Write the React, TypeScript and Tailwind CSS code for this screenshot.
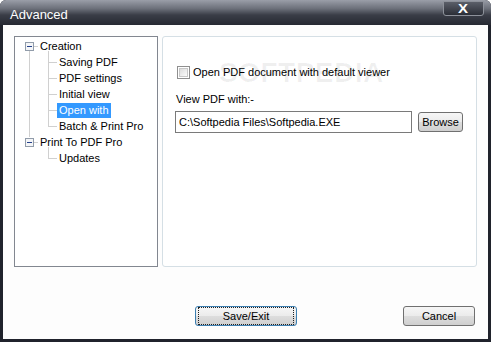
const font = "font-['Liberation_Sans',Arial,sans-serif]";

function TreeLines() {
  // coordinates relative to tree inner box (page x-15, y-37)
  const ox = 15;
  const oy = 37;
  const l = (x1: number, y1: number, x2: number, y2: number, k: string) => (
    <line
      key={k}
      x1={x1 - ox + 0.5}
      y1={y1 - oy + 0.5}
      x2={x2 - ox + 0.5}
      y2={y2 - oy + 0.5}
      stroke="#a0a0a0"
      strokeWidth={1}
      strokeDasharray="1 1"
    />
  );
  const box = (cy: number, k: string) => (
    <g key={k}>
      <rect x={25 - ox + 0.5} y={cy - 4 - oy + 0.5} width={8} height={8} fill="#f4f5f7" stroke="#919caa" />
      <line x1={27 - ox} y1={cy - oy + 0.5} x2={32 - ox} y2={cy - oy + 0.5} stroke="#24418c" />
    </g>
  );
  const rows = [62, 78, 94, 110, 126];
  return (
    <svg className="absolute inset-0 pointer-events-none" width="142" height="229">
      {l(29, 51, 29, 137, "v0")}
      {l(34, 46, 38, 46, "s0")}
      {l(34, 142, 38, 142, "s1")}
      {l(48, 51, 48, 126, "v1")}
      {rows.map((y, i) => l(49, y, 56, y, "c" + i))}
      {l(48, 147, 48, 158, "v2")}
      {l(49, 158, 56, 158, "c9")}
      {box(46, "b0")}
      {box(142, "b1")}
    </svg>
  );
}

function Row({ label, level, selected }: { label: string; level: number; selected?: boolean }) {
  return (
    <div className="h-[16px] flex items-center">
      <span
        className={
          (level === 0 ? "ml-[23px] " : "ml-[42px] ") +
          "px-[2px] h-[15px] leading-[15px] text-[11px] " +
          (selected ? "bg-[#3399ff] text-white" : "text-black")
        }
      >
        {label}
      </span>
    </div>
  );
}

function Button({ label, focused, className }: { label: string; focused?: boolean; className: string }) {
  return (
    <div
      className={
        "h-[20px] rounded-[3px] border flex items-center justify-center text-[11px] text-black bg-[linear-gradient(to_bottom,#f6f6f6_0%,#ebebeb_50%,#dddddd_51%,#cfcfcf_100%)] " +
        (focused ? "border-[#3c7fb1] " : "border-[#707070] ") +
        className
      }
    >
      {focused ? (
        <div className="w-full h-full m-[2px] border border-dotted border-[#202020] flex items-center justify-center">
          {label}
        </div>
      ) : (
        label
      )}
    </div>
  );
}

export default function App() {
  return (
    <div className={"w-[491px] h-[342px] bg-white " + font}>
      <div className="w-[491px] h-[342px] rounded-t-[6px] bg-[#20232c] flex flex-col overflow-hidden">
        <div className="h-[25px] relative flex items-center pt-[3px] px-[10px] bg-[linear-gradient(to_bottom,#9a9ea8_0%,#6b6f79_35%,#3a3d47_60%,#262932_100%)]">
          <span className="text-white text-[13px] leading-none">Advanced</span>
          <div className="absolute left-[443px] top-[1px] w-[41px] h-[15px] rounded-b-[3px] border border-[#8d919a] bg-[linear-gradient(to_bottom,#5b5f69,#2b2e37)] flex items-center justify-center">
            <span className="text-white text-[12px] font-bold leading-none scale-x-125">X</span>
          </div>
        </div>
        <div className="flex-1 mx-[3px] mb-[3px] bg-[#fdfdfd] flex flex-col">
          <div className="flex mt-[11px] ml-[11px] gap-[4px]">
            <div className="w-[144px] h-[231px] border border-[#828790] bg-white">
              <div className="relative w-full h-full pt-[1px]">
                <TreeLines />
                <Row label="Creation" level={0} />
                <Row label="Saving PDF" level={1} />
                <Row label="PDF settings" level={1} />
                <Row label="Initial view" level={1} />
                <Row label="Open with" level={1} selected />
                <Row label="Batch & Print Pro" level={1} />
                <Row label="Print To PDF Pro" level={0} />
                <Row label="Updates" level={1} />
              </div>
            </div>
            <div className="relative w-[315px] h-[231px] border border-[#d5dfe5] rounded-[3px] bg-white pl-[12px]">
              <div
                aria-hidden="true"
                className="absolute left-[56px] top-[22px] text-[28px] font-bold tracking-[0.5px] text-[#000000]/[0.06] leading-none select-none"
              >
                SOFTPEDIA
              </div>
              <div className="relative flex items-center mt-[27px] ml-[2px] gap-[3px]">
                <div className="w-[13px] h-[13px] border border-[#8f8f8f] bg-white p-[1px]">
                  <div className="w-full h-full bg-[linear-gradient(135deg,#dcdcdc,#fbfbfb)] border border-[#c8c8c8]" />
                </div>
                <span className="text-[11px] text-black">Open PDF document with default viewer</span>
              </div>
              <div className="relative mt-[10px] ml-[1px] text-[11px] text-black">View PDF with:-</div>
              <div className="relative flex items-center mt-[4px] gap-[6px]">
                <div className="w-[237px] h-[22px] border border-[#7a7a7a] bg-white flex items-center pl-[3px] text-[11px] text-black">
                  C:\Softpedia Files\Softpedia.EXE
                </div>
                <Button label="Browse" className="w-[45px]" />
              </div>
            </div>
          </div>
          <div className="flex mt-[39px]">
            <Button label="Save/Exit" focused className="ml-[192px] w-[102px]" />
            <Button label="Cancel" className="ml-[106px] w-[72px]" />
          </div>
        </div>
      </div>
    </div>
  );
}
